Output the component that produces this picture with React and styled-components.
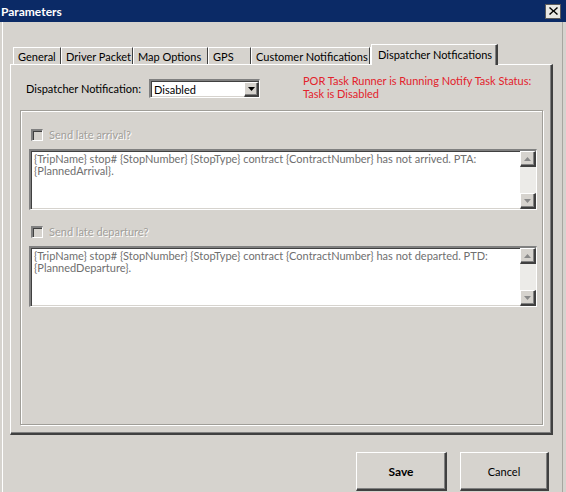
import React from "react";
import styled, { createGlobalStyle, css } from "styled-components";

const GlobalStyle = createGlobalStyle`
  html, body {
    margin: 0;
    padding: 0;
    background: #d6d3ce;
  }
  body {
    font-family: Lato, "Noto Sans", sans-serif;
    font-size: 11px;
    color: #000;
  }
`;

const raised = css`
  border-style: solid;
  border-width: 1px 2px 2px 1px;
  border-color: #ffffff #404040 #404040 #ffffff;
  box-shadow: inset -1px -1px 0 #808080;
`;

const sunken = css`
  border-style: solid;
  border-width: 2px 1px 1px 2px;
  border-color: #808080 #ffffff #ffffff #808080;
  box-shadow: inset 1px 1px 0 #404040, inset -1px -1px 0 #d6d3ce;
`;

const Window = styled.div`
  width: 566px;
  height: 492px;
  display: flex;
  flex-direction: column;
  overflow: hidden;
`;

const TitleBar = styled.div`
  height: 22px;
  flex: none;
  background: #0b2a66;
  color: #fff;
  font-weight: 700;
  font-size: 12px;
  display: flex;
  align-items: center;
  justify-content: space-between;
  padding: 0 5px 0 1px;
`;

const CloseBox = styled.div`
  width: 14px;
  height: 13px;
  background: #e9e8e4;
  border: 1px solid #5c5c5c;
  display: flex;
  align-items: center;
  justify-content: center;
`;

const Body = styled.div`
  flex: 1;
  margin: 0 3px 0 2px;
  border-left: 1px solid #ffffff;
  border-right: 1px solid #a8a6a0;
  padding: 22px 9px 0 7px;
  display: flex;
  flex-direction: column;
`;

const TabStrip = styled.div`
  display: flex;
  align-items: flex-end;
  height: 20px;
  padding-left: 3px;
  position: relative;
  z-index: 1;
`;

const Tab = styled.div`
  width: ${(p) => p.$w}px;
  height: ${(p) => (p.$active ? 21 : 17)}px;
  box-sizing: border-box;
  display: flex;
  align-items: center;
  padding-left: ${(p) => (p.$active ? 6 : 4)}px;
  white-space: nowrap;
  overflow: hidden;
  border-top: 1px solid #ffffff;
  ${(p) =>
    p.$active
      ? css`
          border-left: 1px solid #ffffff;
          border-right: 2px solid #404040;
          box-shadow: inset -1px 0 0 #808080;
          background: #d6d3ce;
          margin-bottom: -1px;
          padding-bottom: 2px;
        `
      : css`
          border-left: ${p.$first ? "1px solid #ffffff" : "none"};
          border-right: 1px solid #404040;
          box-shadow: 1px 0 0 #ffffff;
          margin-right: 1px;
        `}
`;

const Panel = styled.div`
  height: 371px;
  box-sizing: border-box;
  border-style: solid;
  border-width: 1px 2px 2px 1px;
  border-color: #ffffff #404040 #404040 #ffffff;
  box-shadow: inset -1px -1px 0 #808080;
  padding: 14px 8px 8px 9px;
  display: flex;
  flex-direction: column;
`;

const TopRow = styled.div`
  display: flex;
  align-items: flex-start;
  height: 31px;
  padding-left: 6px;
`;

const FieldLabel = styled.span`
  width: 123px;
  line-height: 19px;
  white-space: nowrap;
`;

const Select = styled.div`
  width: 111px;
  height: 19px;
  box-sizing: border-box;
  ${sunken};
  background: #fff;
  display: flex;
  align-items: center;
  justify-content: space-between;
  padding-left: 3px;
`;

const DropButton = styled.div`
  width: 15px;
  height: 15px;
  box-sizing: border-box;
  ${raised};
  background: #d6d3ce;
  display: flex;
  align-items: center;
  justify-content: center;
`;

const Warning = styled.div`
  margin-left: 43px;
  margin-top: -5px;
  color: #e3222c;
  line-height: 13px;
  white-space: nowrap;
`;

const GroupBox = styled.div`
  flex: 1;
  border: 1px solid #a09e98;
  box-shadow: inset 1px 1px 0 #ffffff, 1px 1px 0 #ffffff;
  padding: 16px 5px 0 8px;
  display: flex;
  flex-direction: column;
`;

const CheckRow = styled.div`
  display: flex;
  align-items: center;
  height: 15px;
  margin-top: ${(p) => p.$top}px;
  margin-bottom: 7px;
  padding-left: 2px;
`;

const CheckBox = styled.div`
  width: 12px;
  height: 12px;
  box-sizing: border-box;
  ${sunken};
  background: #d6d3ce;
  margin-right: 6px;
`;

const DisabledLabel = styled.span`
  color: #a2a09b;
  text-shadow: 1px 1px 0 #ffffff;
`;

const TextBox = styled.div`
  height: 61px;
  box-sizing: border-box;
  ${sunken};
  background: #fff;
  display: flex;
`;

const TextBody = styled.div`
  flex: 1;
  color: #6f6f6f;
  line-height: 12px;
  padding: 2px 3px;
  white-space: nowrap;
  overflow: hidden;
`;

const ScrollBar = styled.div`
  width: 16px;
  background: #ecebe8;
  display: flex;
  flex-direction: column;
  justify-content: space-between;
`;

const ScrollButton = styled.div`
  height: 16px;
  box-sizing: border-box;
  ${raised};
  background: #d6d3ce;
  display: flex;
  align-items: center;
  justify-content: center;
`;

const ButtonRow = styled.div`
  display: flex;
  justify-content: flex-end;
  gap: 13px;
  padding: 17px 4px 0 0;
`;

const Button = styled.div`
  width: ${(p) => p.$w}px;
  height: 39px;
  box-sizing: border-box;
  ${raised};
  background: #d6d3ce;
  display: flex;
  align-items: center;
  justify-content: center;
  font-weight: ${(p) => (p.$bold ? 700 : 400)};
  font-size: ${(p) => (p.$bold ? 12 : 11)}px;
`;

const Arrow = ({ up, color = "#000" }) => (
  <svg width="7" height="4" viewBox="0 0 7 4">
    <path d={up ? "M0 4 L3.5 0 L7 4 Z" : "M0 0 L7 0 L3.5 4 Z"} fill={color} />
  </svg>
);

const MessageBox = ({ children }) => (
  <TextBox>
    <TextBody>{children}</TextBody>
    <ScrollBar>
      <ScrollButton>
        <Arrow up color="#8a8a8a" />
      </ScrollButton>
      <ScrollButton>
        <Arrow color="#8a8a8a" />
      </ScrollButton>
    </ScrollBar>
  </TextBox>
);

const tabs = [
  { label: "General", w: 48, first: true },
  { label: "Driver Packet", w: 71 },
  { label: "Map Options", w: 74 },
  { label: "GPS", w: 42 },
  { label: "Customer Notifications", w: 118 },
  { label: "Dispatcher Notfications", w: 127, active: true },
];

const App = () => {
  return (
    <Window>
      <GlobalStyle />
      <TitleBar>
        <span>Parameters</span>
        <CloseBox>
          <svg width="9" height="8" viewBox="0 0 9 8">
            <path d="M1 0 L4.5 3.2 L8 0 L9 1 L5.6 4 L9 7 L8 8 L4.5 4.8 L1 8 L0 7 L3.4 4 L0 1 Z" fill="#000" />
          </svg>
        </CloseBox>
      </TitleBar>
      <Body>
        <TabStrip>
          {tabs.map((t) => (
            <Tab key={t.label} $w={t.w} $first={t.first} $active={t.active}>
              {t.label}
            </Tab>
          ))}
        </TabStrip>
        <Panel>
          <TopRow>
            <FieldLabel>Dispatcher Notification:</FieldLabel>
            <Select>
              <span>Disabled</span>
              <DropButton>
                <Arrow />
              </DropButton>
            </Select>
            <Warning>
              POR Task Runner is Running Notify Task Status:
              <br />
              Task is Disabled
            </Warning>
          </TopRow>
          <GroupBox>
            <CheckRow $top={0}>
              <CheckBox />
              <DisabledLabel>Send late arrival?</DisabledLabel>
            </CheckRow>
            <MessageBox>
              {"{TripName} stop# {StopNumber} {StopType} contract {ContractNumber} has not arrived. PTA:"}
              <br />
              {"{PlannedArrival}."}
            </MessageBox>
            <CheckRow $top={14}>
              <CheckBox />
              <DisabledLabel>Send late departure?</DisabledLabel>
            </CheckRow>
            <MessageBox>
              {"{TripName} stop# {StopNumber} {StopType} contract {ContractNumber} has not departed. PTD:"}
              <br />
              {"{PlannedDeparture}."}
            </MessageBox>
          </GroupBox>
        </Panel>
        <ButtonRow>
          <Button $w={91} $bold>
            Save
          </Button>
          <Button $w={89}>Cancel</Button>
        </ButtonRow>
      </Body>
    </Window>
  );
};

export default App;
